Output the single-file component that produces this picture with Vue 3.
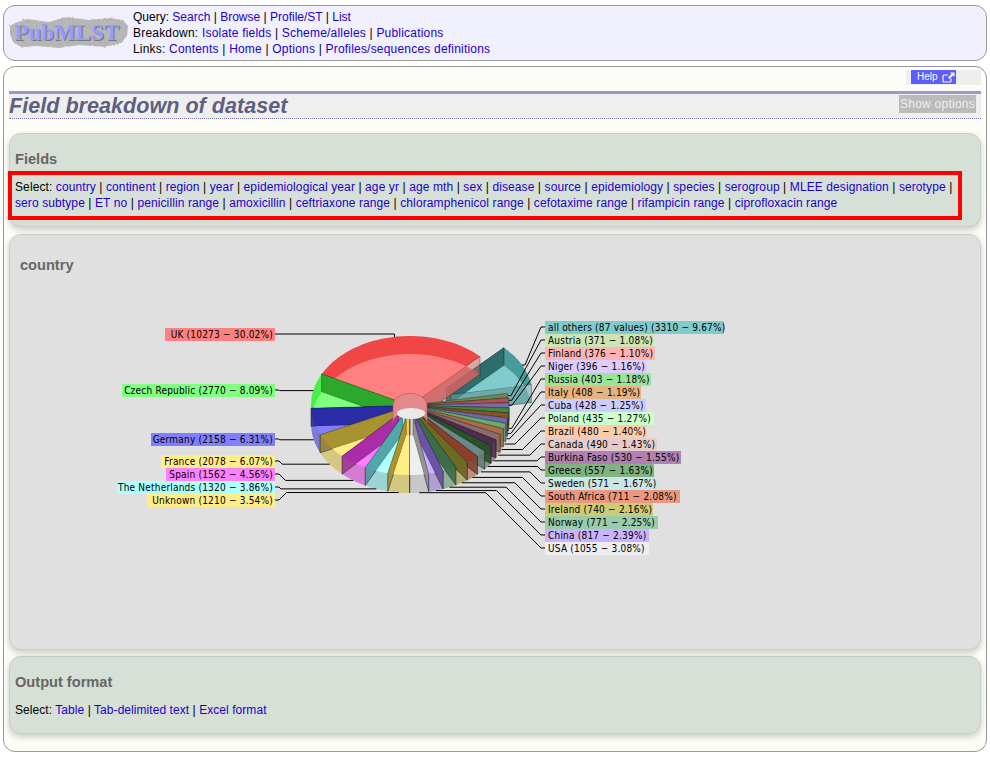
<template>
  <div class="page">
    <header class="top">
      <svg class="logo" width="120" height="34" viewBox="0 0 120 34">
        <defs>
          <filter id="rock" x="-5%" y="-5%" width="110%" height="110%">
            <feTurbulence type="fractalNoise" baseFrequency="0.4" numOctaves="3" seed="4" result="n" />
            <feDisplacementMap in="SourceGraphic" in2="n" scale="2.5" result="d" />
            <feColorMatrix in="n" type="matrix" values="0 0 0 0 0.55  0 0 0 0 0.55  0 0 0 0 0.55  0.8 0 0 0 -0.25" result="spots" />
            <feComposite in="spots" in2="d" operator="in" result="s" />
            <feMerge>
              <feMergeNode in="d" />
              <feMergeNode in="s" />
            </feMerge>
          </filter>
        </defs>
        <path class="rock" filter="url(#rock)" d="M1 10 L6 7 L18 3 L40 6 L58 1 L80 4 L100 2 L114 4 L119 10 L118 20 L112 27 L96 31 L70 29 L50 32 L28 30 L12 31 L4 26 L1 18 Z" />
        <text class="logo-shade" x="6.5" y="24.5">PubMLST</text>
        <text class="logo-text" x="5.5" y="23.5">PubMLST</text>
      </svg>
      <div class="menu">
        <div v-for="row in menu" :key="row.label">
          {{ row.label }}:
          <template v-for="(link, n) in row.links" :key="link"><span v-if="n > 0"> | </span><a href="#">{{ link }}</a></template>
        </div>
      </div>
    </header>

    <main class="content">
      <div class="help-row">
        <a class="help" href="#">
          Help
          <svg width="13" height="11" viewBox="0 0 13 11">
            <path d="M9 6.5 V9 a1 1 0 0 1 -1 1 H2 a1 1 0 0 1 -1 -1 V4 a1 1 0 0 1 1 -1 H6" fill="none" stroke="#fff" stroke-width="1.2" />
            <path d="M8 0.5 H12.5 V5 L11 3.5 L7.5 7 L6 5.5 L9.5 2 Z" fill="#fff" />
          </svg>
        </a>
      </div>
      <div class="title">
        <h1>Field breakdown of dataset</h1>
        <a class="show" href="#">Show options</a>
      </div>

      <section class="panel green fields">
        <h2>Fields</h2>
        <div class="select-box">
          Select:
          <template v-for="(f, n) in fields" :key="f"><a href="#">{{ f }}</a><span v-if="n < fields.length - 1"> | </span></template>
        </div>
      </section>

      <section class="panel chart">
        <h2>country</h2>
        <svg class="pie" width="972" height="416" viewBox="9 234 972 416">
          <defs>
            <clipPath v-for="s in slices" :id="'top' + s.n" :key="s.n"><path :d="s.top" /></clipPath>
          </defs>
          <g v-for="s in paintOrder" :key="s.n">
            <path :d="s.bottom" :fill="s.muted" fill-opacity="0.8" />
            <path :d="s.top" :fill="s.back" fill-opacity="0.9" />
            <path v-for="(w, i) in s.walls" :key="i" :d="w.d" :fill="w.fill" :fill-opacity="w.alpha" stroke="#000" stroke-opacity="0.4" stroke-width="0.8" />
            <path :d="s.bottom" :fill="s.color" :clip-path="'url(#top' + s.n + ')'" />
          </g>
          <path :d="holeWall" fill="#e28a8a" stroke="#a06060" stroke-width="0.6" />
          <ellipse cx="411" cy="413.5" rx="14" ry="5.5" fill="#e9e9e9" />
          <polyline v-for="l in leaders" :key="l.name" :points="l.points" fill="none" stroke="#000" stroke-width="1" />
        </svg>
        <span v-for="l in leftLabels" :key="l.name" class="label left" :style="{ width: l.width + 'px', top: l.y - 241 + 'px', background: l.color }">{{ l.text }}</span>
        <span v-for="l in rightLabels" :key="l.name" class="label right" :style="{ width: l.width + 'px', top: l.y - 241 + 'px', background: l.color }">{{ l.text }}</span>
      </section>

      <section class="panel green output">
        <h2>Output format</h2>
        <p>Select: <a href="#">Table</a> | <a href="#">Tab-delimited text</a> | <a href="#">Excel format</a></p>
      </section>
    </main>
  </div>
</template>

<script setup>
const menu = [
  { label: 'Query', links: ['Search', 'Browse', 'Profile/ST', 'List'] },
  { label: 'Breakdown', links: ['Isolate fields', 'Scheme/alleles', 'Publications'] },
  { label: 'Links', links: ['Contents', 'Home', 'Options', 'Profiles/sequences definitions'] },
]

const fields = [
  'country', 'continent', 'region', 'year', 'epidemiological year', 'age yr', 'age mth', 'sex', 'disease',
  'source', 'epidemiology', 'species', 'serogroup', 'MLEE designation', 'serotype', 'sero subtype', 'ET no',
  'penicillin range', 'amoxicillin', 'ceftriaxone range', 'chloramphenicol range', 'cefotaxime range',
  'rifampicin range', 'ciprofloxacin range',
]

// name, count, percent, colour, label width - in pie order, counter-clockwise from 45deg
const data = [
  ['UK', 10273, 30.02, '#ff8080', 110],
  ['Czech Republic', 2770, 8.09, '#80ff80', 153],
  ['Germany', 2158, 6.31, '#8080ff', 124],
  ['France', 2078, 6.07, '#ffee88', 114],
  ['Spain', 1562, 4.56, '#ff80ff', 109],
  ['The Netherlands', 1320, 3.86, '#b0ffff', 158],
  ['Unknown', 1210, 3.54, '#ffee88', 128],
  ['USA', 1055, 3.08, '#eeeeee', 104],
  ['China', 817, 2.39, '#ccb3ff', 104],
  ['Norway', 771, 2.25, '#99ccaa', 113],
  ['Ireland', 740, 2.16, '#cccc77', 108],
  ['South Africa', 711, 2.08, '#e89980', 135],
  ['Sweden', 571, 1.67, '#cce5e5', 114],
  ['Greece', 557, 1.63, '#80b380', 109],
  ['Burkina Faso', 530, 1.55, '#b080b0', 136],
  ['Canada', 490, 1.43, '#e5cccc', 112],
  ['Brazil', 480, 1.40, '#ffccaa', 102],
  ['Poland', 435, 1.27, '#ccffcc', 109],
  ['Cuba', 428, 1.25, '#ccccff', 101],
  ['Italy', 408, 1.19, '#e5b380', 96],
  ['Russia', 403, 1.18, '#99e599', 106],
  ['Niger', 396, 1.16, '#ddccff', 102],
  ['Finland', 376, 1.10, '#ffb3b3', 110],
  ['Austria', 371, 1.08, '#cce5b3', 109],
  ['all others (87 values)', 3310, 9.67, '#80cccc', 179],
]

const CX = 410, CY = 405.5, RX = 99, RY = 69.5, DEPTH = 18, IN_RX = 17, IN_RY = 12, EXPLODE = 27
const rad = (a) => (a * Math.PI) / 180

function pt(a, rx, ry, dy, off) {
  return [CX + off[0] + rx * Math.cos(rad(a)), CY + off[1] + dy - ry * Math.sin(rad(a))]
}
function toPath(pts) {
  return 'M' + pts.map((p) => p[0].toFixed(1) + ' ' + p[1].toFixed(1)).join('L') + 'Z'
}
function arc(a0, a1, rx, ry, dy, off) {
  const n = Math.max(2, Math.ceil(Math.abs(a1 - a0) / 3))
  const pts = []
  for (let i = 0; i <= n; i++) pts.push(pt(a0 + ((a1 - a0) * i) / n, rx, ry, dy, off))
  return pts
}
function ring(a0, a1, dy, off) {
  return toPath([...arc(a0, a1, RX, RY, dy, off), ...arc(a1, a0, IN_RX, IN_RY, dy, off)])
}
function wall(a, off) {
  return toPath([pt(a, RX, RY, 0, off), pt(a, RX, RY, DEPTH, off), pt(a, IN_RX, IN_RY, DEPTH, off), pt(a, IN_RX, IN_RY, 0, off)])
}
function shade(hex, k, pow) {
  const c = [1, 3, 5].map((i) => parseInt(hex.slice(i, i + 2), 16))
  const out = c.map((v) => Math.round(255 * Math.pow(v / 255, pow) * k))
  return `rgb(${out.join(',')})`
}

let angle = 45
const slices = data.map((d, n) => {
  const a0 = angle
  const a1 = angle + (d[2] / 100) * 360
  angle = a1
  const mid = (a0 + a1) / 2
  const off = n === data.length - 1
    ? [EXPLODE * Math.cos(rad(mid)), -EXPLODE * 0.7 * Math.sin(rad(mid))]
    : [0, 0]
  const dark = shade(d[3], 0.62, 2)
  const muted = shade(d[3], 0.82, 1.1)
  // walls that face the viewer look washed out, the ones seen through the pie are dark
  const frontA = Math.cos(rad(a0)) > 0
  const frontB = Math.cos(rad(a1)) < 0
  const wallA = { d: wall(a0, off), fill: frontA ? muted : dark, alpha: frontA ? 0.45 : 0.85 }
  const wallB = { d: wall(a1, off), fill: frontB ? muted : dark, alpha: frontB ? 0.45 : 0.85 }
  return {
    n, mid, off, muted,
    name: d[0],
    width: d[4],
    color: d[3],
    back: shade(d[3], 0.95, 2.2),
    top: ring(a0, a1, 0, off),
    bottom: ring(a0, a1, DEPTH, off),
    // dark one first so the washed out wall of the same slice lies over it
    walls: frontA ? [wallB, wallA] : [wallA, wallB],
    text: `${d[0]} (${d[1]} − ${d[2].toFixed(2)}%)`,
  }
})

// back to front: pulled out slice, then the left half going down, then the right half going down
const paintOrder = [slices[slices.length - 1], ...slices.slice(0, 7), ...slices.slice(7, -1).reverse()]

const holeWall = toPath([...arc(0, 180, IN_RX, IN_RY, 0, [0, 0]), ...arc(180, 0, IN_RX, IN_RY, DEPTH, [0, 0])])

function rimPoint(mid) {
  const s = Math.sin(rad(mid))
  return [CX + RX * Math.cos(rad(mid)), CY + (s > 0 ? 0 : DEPTH) - RY * s]
}

const leftY = { UK: 334, 'Czech Republic': 390, Germany: 439, France: 461, Spain: 474, 'The Netherlands': 487, Unknown: 500 }
const leftLabels = slices.slice(0, 7).map((s) => ({ ...s, y: leftY[s.name] }))
// right column reads top-down, starting with "all others"
const rightLabels = slices.slice(7).reverse().map((s, i) => ({ ...s, y: 327 + i * 13 }))

const leaders = []
leftLabels.forEach((l) => {
  const [rx, ry] = rimPoint(l.mid)
  const pts = l.name === 'UK'
    ? [[275, l.y], [rx, l.y], [rx, ry]]
    : [[275, l.y], [279, l.y], [279 + Math.abs(ry - l.y), ry], [rx, ry]]
  leaders.push({ name: l.name, points: pts.map((p) => p.join(',')).join(' ') })
})
rightLabels.forEach((l, i) => {
  const [rx, ry] = i === 0 ? [522, 365] : rimPoint(l.mid)
  const bend = 541 - Math.abs(ry - l.y)
  const pts = bend > rx + 4
    ? [[545, l.y], [541, l.y], [bend, ry], [rx, ry]]
    : [[545, l.y], [541, l.y], [rx + 3, ry], [rx, ry]]
  leaders.push({ name: l.name, points: pts.map((p) => p.join(',')).join(' ') })
})
</script>

<style>
html,
body {
  margin: 0;
  background: #fff;
}
</style>

<style scoped>
.page {
  box-sizing: border-box;
  width: 990px;
  padding: 5px 3px 0;
  font-family: "Liberation Sans", Arial, sans-serif;
  font-size: 12px;
  line-height: 16px;
  color: #000;
}
a {
  color: #2200cc;
  text-decoration: none;
}
.top {
  box-sizing: border-box;
  height: 56px;
  display: flex;
  align-items: center;
  gap: 4px;
  padding: 0 0 0 5px;
  background: #f0f0ff;
  border: 1px solid #999;
  border-radius: 12px;
}
.logo {
  flex: none;
  margin-top: -1px;
}
.rock {
  fill: #b4b4b4;
}
.logo-text,
.logo-shade {
  font-family: "Liberation Serif", serif;
  font-weight: bold;
  font-size: 23px;
}
.logo-text {
  fill: #9a9aff;
}
.logo-shade {
  fill: #77777f;
}
.menu {
  margin-top: -1px;
}
.menu div:nth-child(2),
.menu div:nth-child(3) {
  letter-spacing: 0.2px;
}
.content {
  box-sizing: border-box;
  height: 686px;
  margin-top: 5px;
  padding: 3px 5px 0;
  background: #fdfdf8;
  border: 1px solid #999;
  border-radius: 12px;
}
.help-row {
  width: 75px;
  height: 15px;
  margin-left: auto;
  background: #eee;
}
.help {
  box-sizing: border-box;
  display: flex;
  align-items: center;
  gap: 4px;
  width: 45px;
  height: 14px;
  margin-left: 5px;
  padding-left: 6px;
  background: #5c5cff;
  color: #fff;
  font-size: 10px;
}
.title {
  box-sizing: border-box;
  display: flex;
  justify-content: space-between;
  height: 28px;
  margin-top: 6px;
  background: #efefef;
  border-top: 3px solid #9999cc;
  border-bottom: 1px dotted #7777bb;
}
h1 {
  margin: 0;
  color: #5f5f7f;
  font-size: 21.6px;
  line-height: 24px;
  font-style: italic;
  font-weight: bold;
}
.show {
  height: 18px;
  margin: 1px 5px 0 0;
  padding: 0 1px;
  background: #bbb;
  color: #eee;
  line-height: 18px;
  letter-spacing: 0.25px;
}
.panel {
  box-sizing: border-box;
  border: 1px solid #ccc;
  border-radius: 12px;
  box-shadow: 0 3px 6px rgba(0, 0, 0, 0.2);
}
.green {
  background: #d6e0d6;
}
h2 {
  margin: 0;
  color: #666;
  font-size: 14.6px;
  line-height: 16px;
  font-weight: bold;
}
.fields {
  height: 94px;
  margin-top: 14px;
  padding: 17px 0 0 5px;
}
.select-box {
  box-sizing: border-box;
  width: 954px;
  height: 49px;
  margin: 4px 0 0 -7px;
  padding: 4px 3px;
  border: 4px solid #f00;
  letter-spacing: 0.1px;
}
.chart {
  position: relative;
  height: 416px;
  margin-top: 7px;
  padding: 22px 0 0 10px;
  background: #e0e0e0;
}
.pie {
  position: absolute;
  left: -1px;
  top: -1px;
}
.label {
  position: absolute;
  box-sizing: border-box;
  height: 13px;
  font-family: "DejaVu Sans", sans-serif;
  font-stretch: condensed;
  font-size: 10px;
  line-height: 13px;
  letter-spacing: 0.2px;
  white-space: nowrap;
}
.label.left {
  right: 705px;
  padding-right: 2px;
  text-align: right;
}
.label.right {
  left: 535px;
  padding-left: 3px;
}
.output {
  height: 78px;
  margin-top: 6px;
  padding: 17px 0 0 5px;
}
.output p {
  margin: 12px 0 0;
  letter-spacing: 0.06px;
}
</style>
